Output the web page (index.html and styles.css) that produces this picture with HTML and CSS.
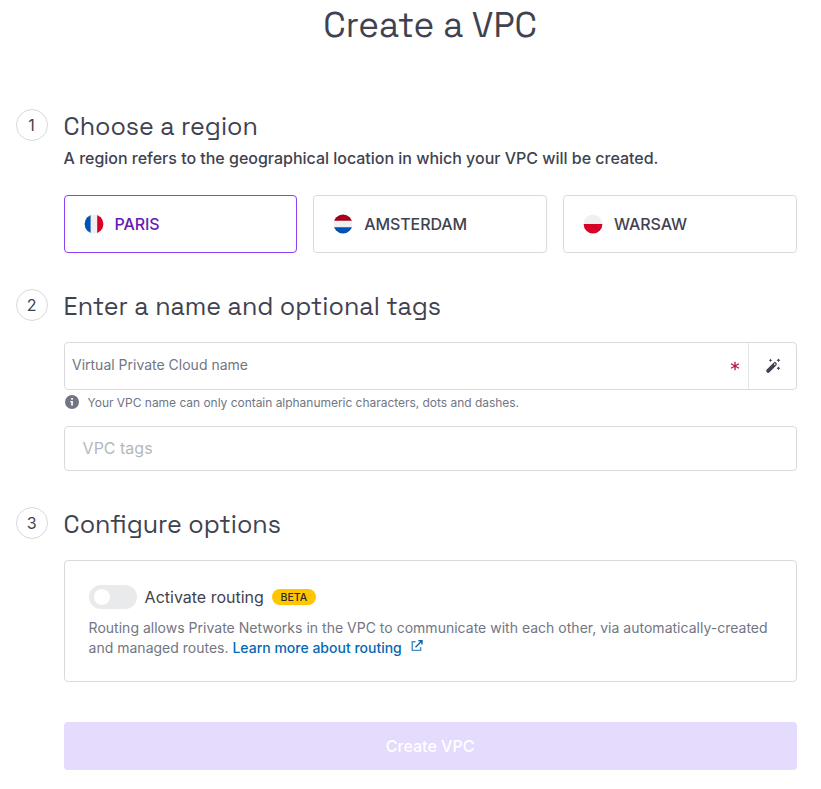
FILE: index.html
```html
<!DOCTYPE html>
<html lang="en">
<head>
<meta charset="utf-8">
<title>Create a VPC</title>
<link rel="stylesheet" href="styles.css">
</head>
<body>
<main class="page">
  <h1 class="title">Create a VPC</h1>

  <section class="step step-region">
    <span class="badge">1</span>
    <div class="body">
      <h2>Choose a region</h2>
      <p class="lead">A region refers to the geographical location in which your VPC will be created.</p>
      <div class="regions">
        <div class="region selected">
          <svg class="flag" viewBox="0 0 20 20"><clipPath id="c"><circle cx="10" cy="10" r="9.4"/></clipPath><g clip-path="url(#c)"><path fill="#f0f0f0" d="M0 0h20v20H0z"/><path fill="#0052b4" d="M0 0h6.6v20H0z"/><path fill="#d80027" d="M13.2 0H20v20h-6.8z"/></g></svg>
          <span>PARIS</span>
        </div>
        <div class="region">
          <svg class="flag" viewBox="0 0 20 20"><g clip-path="url(#c)"><path fill="#f0f0f0" d="M0 0h20v20H0z"/><path fill="#a2001d" d="M0 0h20v6.8H0z"/><path fill="#0052b4" d="M0 13.2h20V20H0z"/></g></svg>
          <span>AMSTERDAM</span>
        </div>
        <div class="region">
          <svg class="flag" viewBox="0 0 20 20"><g clip-path="url(#c)"><path fill="#f0f0f0" d="M0 0h20v20H0z"/><path fill="#d80027" d="M0 10h20v10H0z"/></g></svg>
          <span>WARSAW</span>
        </div>
      </div>
    </div>
  </section>

  <section class="step step-name">
    <span class="badge">2</span>
    <div class="body">
      <h2>Enter a name and optional tags</h2>
      <div class="field">
        <span class="field-label">Virtual Private Cloud name</span>
        <svg class="required" viewBox="0 0 10 10"><path d="M5 .7v8.6M1 2.8l8 4.4M9 2.8L1 7.2" stroke="#b3144d" stroke-width="1.3" fill="none"/></svg>
        <span class="wand">
          <svg width="16" height="16" viewBox="0 0 16 16" fill="#3f4250"><path d="M3.100 12.900L9.900 6.100" stroke="#3f4250" stroke-width="3.800" stroke-linecap="round"/><path d="M9.300 6.700l1-1" stroke="#fff" stroke-width="1.300"/><path d="M5.500 .6l.6 1.100 1.100.6-1.100.6-.6 1.100-.6-1.100-1.100-.6 1.100-.6zM13.500 .4l.7 1.200 1.200.7-1.200.7-.7 1.200-.7-1.200-1.200-.7 1.200-.7zM13.500 8.400l.7 1.200 1.200.7-1.200.7-.7 1.200-.7-1.200-1.200-.7 1.200-.7z"/></svg>
        </span>
      </div>
      <div class="hint">
        <svg width="14" height="14" viewBox="0 0 14 14"><circle cx="7" cy="7" r="7" fill="#727683"/><path fill="#fff" d="M6.200 3h1.700v1.700H6.200zM5.200 6h2.700v4.600H6.200V7.300h-1z"/></svg>
        <span class="hint-text">Your VPC name can only contain alphanumeric characters, dots and dashes.</span>
      </div>
      <div class="tags">VPC tags</div>
    </div>
  </section>

  <section class="step step-options">
    <span class="badge">3</span>
    <div class="body">
      <h2>Configure options</h2>
      <div class="card">
        <div class="toggle-row">
          <span class="toggle"></span>
          <span class="toggle-label">Activate routing</span>
          <span class="beta">BETA</span>
        </div>
        <p class="desc"><span class="line-one">Routing allows Private Networks in the VPC to communicate with each other, via automatically-created</span><br>and managed routes. <a class="link">Learn more about routing</a><svg class="ext" width="14" height="14" viewBox="0 0 14 14" fill="none" stroke="#0667b3" stroke-width="1.400"><path opacity=".75" d="M5.500 2.800H2.200v8.600h8.400V8"/><path d="M8.400 1.800h3.600v3.600M12 1.800L5.500 8.300"/></svg></p>
      </div>
      <button class="submit" disabled>Create VPC</button>
    </div>
  </section>
</main>
</body>
</html>
```
FILE: styles.css
```css
* { box-sizing: border-box; }
body {
  margin: 0;
  background: #fff;
  color: #3f4250;
  font: 400 16px/24px Inter, sans-serif;
}
h1, h2, p { margin: 0; }
.page { padding: 0 24.3px 0 15.6px; }
.title {
  height: 109px;
  padding: 3px 0 0 48px;
  text-align: center;
  font: 400 35px/44px "Space Grotesk", Inter, sans-serif;
}
.step { display: flex; gap: 16px; }
.step-region { height: 180px; }
.step-name { height: 218px; }
.badge {
  flex: none;
  width: 32px;
  height: 32px;
  border: 1px solid #d9dadd;
  border-radius: 50%;
  text-align: center;
  line-height: 31px;
}
.body { flex: 1; min-width: 0; }
h2 {
  height: 32px;
  padding-top: 1px;
  font: 400 25px/32px "Space Grotesk", Inter, sans-serif;
  white-space: nowrap;
}
.lead {
  margin-top: 5px;
  font-weight: 500;
  letter-spacing: -0.015px;
  white-space: nowrap;
}
.regions {
  display: grid;
  grid-template-columns: repeat(3, 1fr);
  gap: 16px;
  margin-top: 25px;
}
.region {
  display: flex;
  align-items: center;
  gap: 11px;
  height: 58px;
  padding-left: 19px;
  border: 1px solid #d9dadd;
  border-radius: 4px;
  font-weight: 500;
  letter-spacing: -0.1px;
}
.selected { border-color: #8c40ef; color: #641cb3; }
.flag { width: 20px; height: 20px; }
.field {
  display: flex;
  align-items: center;
  height: 48px;
  margin-top: 21px;
  padding-left: 7.4px;
  border: 1px solid #d9dadd;
  border-radius: 4px;
}
.field-label {
  flex: 1;
  color: #727683;
  font-size: 14px;
  line-height: 20px;
  padding-bottom: 3px;
}
.required { width: 10px; height: 10px; margin-right: 8px; }
.wand {
  display: grid;
  place-items: center;
  width: 48px;
  height: 46px;
  padding-left: 1px;
  border-left: 1px solid #e3e4e7;
}
.hint {
  display: flex;
  align-items: center;
  gap: 9px;
  height: 16px;
  margin-top: 4px;
  padding-left: 1px;
  color: #727683;
  font-size: 12px;
  line-height: 16px;
}
.hint-text { padding-top: 2px; letter-spacing: -0.03px; }
.tags {
  height: 45px;
  margin-top: 16px;
  padding-left: 18px;
  border: 1px solid #d9dadd;
  border-radius: 4px;
  color: #b5b7bd;
  line-height: 42px;
}
.card {
  height: 122px;
  margin-top: 21px;
  padding: 24px;
  border: 1px solid #d9dadd;
  border-radius: 4px;
}
.toggle-row { display: flex; align-items: center; gap: 8px; height: 24px; }
.toggle {
  width: 48px;
  height: 24px;
  padding: 4px 5px;
  border-radius: 12px;
  background: #e9eaeb;
}
.toggle::before {
  content: "";
  display: block;
  width: 16px;
  height: 16px;
  border-radius: 50%;
  background: #fff;
}
.beta {
  width: 44px;
  height: 16px;
  border-radius: 8px;
  background: #ffc600;
  color: #2b2b2b;
  font-size: 10.5px;
  font-weight: 500;
  line-height: 17px;
  text-align: center;
}
.desc {
  margin-top: 9px;
  color: #727683;
  font-size: 14px;
  line-height: 20px;
  white-space: nowrap;
}
.line-one { letter-spacing: 0.012px; }
.link { color: #0667b3; font-weight: 500; }
.ext { margin-left: 8px; vertical-align: 0; }
.submit {
  display: block;
  width: 100%;
  height: 48px;
  margin-top: 40px;
  padding: 0;
  border: 0;
  border-radius: 4px;
  background: #e5dbfd;
  color: #fff;
  font: 500 16px/48px Inter, sans-serif;
}
```
